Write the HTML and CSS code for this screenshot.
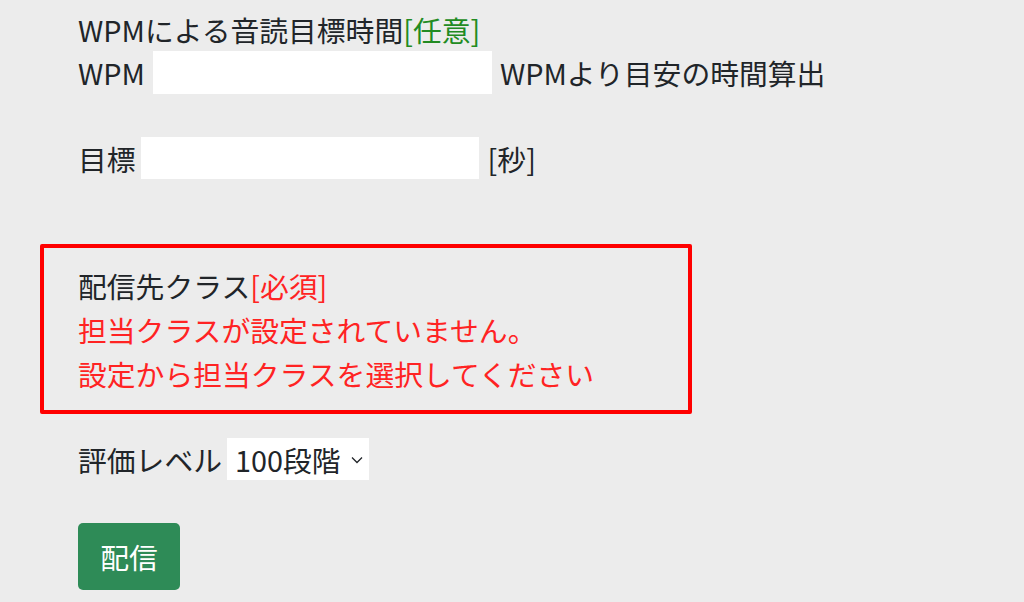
FILE: index.html
```html
<!DOCTYPE html>
<html lang="ja">
<head>
  <meta charset="UTF-8">
  <meta name="viewport" content="width=device-width, initial-scale=1.0">
  <title>配信設定</title>
  <link rel="stylesheet" href="styles.css">
</head>
<body>
  <main class="form">
    <div class="label-line">WPMによる音読目標時間<span class="optional">[任意]</span></div>
    <div class="row">
      <label for="wpm">WPM</label>
      <input type="text" id="wpm" class="text-input">
      <span>WPMより目安の時間算出</span>
    </div>

    <div class="row target-row">
      <label for="target">目標</label>
      <input type="text" id="target" class="text-input">
      <span class="unit">[秒]</span>
    </div>

    <div class="class-box">
      <div class="label-line">配信先クラス<span class="required">[必須]</span></div>
      <div class="label-line error">担当クラスが設定されていません。</div>
      <div class="label-line error">設定から担当クラスを選択してください</div>
    </div>

    <div class="row level-row">
      <label for="level">評価レベル</label>
      <div class="select-wrap">
        <select id="level" class="level-select">
          <option>100段階</option>
          <option>10段階</option>
          <option>5段階</option>
        </select>
        <svg class="chevron" viewBox="0 0 12 8" width="12" height="8">
          <path d="M1 1.5l5 5 5-5" fill="none" stroke="#212529" stroke-width="1.3"/>
        </svg>
      </div>
    </div>

    <button class="send-button">配信</button>
  </main>
</body>
</html>
```

FILE: styles.css
```css
body {
  margin: 0;
  background-color: #ececec;
  color: #212529;
  font-family: "Noto Sans CJK JP", "Noto Sans", sans-serif;
  font-size: 28.8px;
}

.form {
  padding: 8px 0 0 78px;
}

.label-line {
  height: 43px;
  line-height: 43px;
  white-space: nowrap;
}

.optional {
  color: #228b22;
}

.required,
.error {
  color: #ff2323;
}

.row {
  display: flex;
  align-items: center;
  gap: 8px;
  height: 43px;
  white-space: nowrap;
}

.text-input {
  width: 339px;
  height: 43px;
  box-sizing: border-box;
  border: none;
  background-color: #fff;
  font: inherit;
  padding: 0 8px;
}

.target-row {
  margin-top: 43px;
  height: 42px;
  gap: 5px;
}

.target-row .text-input {
  width: 338px;
  height: 42px;
}

.target-row .unit {
  margin-left: 4px;
}

.class-box {
  margin: 65px 0 0 -38px;
  width: 652px;
  box-sizing: border-box;
  border: 4px solid #ff0000;
  border-radius: 2px;
  padding: 16px 0 15px 34px;
}

.class-box .label-line + .label-line {
  margin-top: 1px;
}

.level-row {
  margin-top: 24px;
  height: 42px;
  gap: 5px;
}

.select-wrap {
  position: relative;
  height: 42px;
}

.level-select {
  appearance: none;
  width: 142px;
  height: 42px;
  border: none;
  border-radius: 0;
  background-color: #fff;
  color: #212529;
  font: inherit;
  padding: 0 28px 0 8px;
}

.chevron {
  position: absolute;
  right: 6px;
  top: 18px;
  pointer-events: none;
}

.send-button {
  margin-top: 43px;
  width: 102px;
  height: 67px;
  border: none;
  border-radius: 5px;
  background-color: #2e8b57;
  color: #fff;
  font: inherit;
  cursor: pointer;
}
```
